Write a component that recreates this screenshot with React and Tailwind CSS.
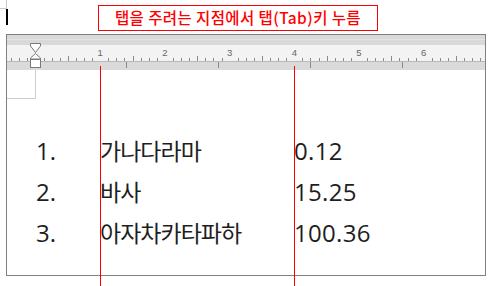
import React from "react";

const ORIGIN = 28.5; // svg x of ruler zero
const UNIT = 64.7;

function Ruler() {
  const ticks = [];
  for (let k = -3; k <= 56; k++) {
    const x = ORIGIN + (UNIT / 8) * k;
    if (x < 0 || x > 477) continue;
    if (k % 8 === 0) continue;
    const half = k % 4 === 0;
    ticks.push(
      <line
        key={k}
        x1={Math.round(x) + 0.5}
        x2={Math.round(x) + 0.5}
        y1={half ? 21 : 23}
        y2={26}
        stroke="#8a8a8a"
        strokeWidth="1"
      />
    );
  }
  const nums = [1, 2, 3, 4, 5, 6];
  const lower = [126, 218, 310, 402];
  return (
    <svg width="478" height="35" className="block">
      <rect x="0" y="0" width="478" height="10" fill="#d9d9d9" />
      <line x1="0" x2="478" y1="4.5" y2="4.5" stroke="#e3e3e3" />
      <rect x="0" y="10" width="478" height="16" fill="#f3f3f3" />
      <rect x="0" y="26" width="478" height="9" fill="#dadada" />
      <line x1="0" x2="478" y1="26.5" y2="26.5" stroke="#b9b9b9" />
      {ticks}
      {nums.map((n) => (
        <text
          key={n}
          x={ORIGIN + UNIT * n}
          y="21"
          textAnchor="middle"
          fontSize="9.5"
          fill="#666666"
          fontFamily="'Liberation Sans', sans-serif"
        >
          {n}
        </text>
      ))}
      {lower.map((x) => (
        <line key={x} x1={x - 7 + 0.5} x2={x - 7 + 0.5} y1="27" y2="33" stroke="#8a8a8a" />
      ))}
      <path d="M23.5 8.5 H33.5 V11 L28.5 17.5 L23.5 11 Z" fill="#ffffff" stroke="#7a7a7a" />
      <path d="M28.5 18.5 L33.5 23 V24 H23.5 V23 Z" fill="#ffffff" stroke="#7a7a7a" />
      <rect x="23.5" y="24.5" width="10" height="8" fill="#ffffff" stroke="#7a7a7a" />
    </svg>
  );
}

const rows = [
  ["1.", "가나다라마", "0.12"],
  ["2.", "바사", "15.25"],
  ["3.", "아자차카타파하", "100.36"],
];

const latin = { fontFamily: "'Open Sans', 'Noto Sans', sans-serif" };
const hangul = { fontFamily: "'Noto Sans CJK KR', sans-serif" };

export default function App() {
  return (
    <div
      className="relative w-[493px] h-[286px] overflow-hidden bg-white"
      style={hangul}
    >
      <div className="flex items-start h-[34px]">
        <div className="flex flex-col w-[8px]">
          <div className="w-[7px] h-[9px] border-r border-b border-[#c8c8c8]" />
          <div className="ml-[6px] w-[2px] h-[16px] bg-black" />
        </div>
        <div className="ml-[90px] mt-[5px] w-[280px] h-[26px] border border-[#ff0000] flex items-center justify-center text-[15.5px] font-medium leading-none text-[#ff0000] tracking-[0.4px]">
          탭을 주려는 지점에서 탭(Tab)키 누름
        </div>
      </div>
      <div className="ml-[6px] w-[480px] h-[242px] border border-[#808080] flex flex-col">
        <Ruler />
        <div className="w-[29px] h-[29px] border-r border-b border-[#cfcfcf]" />
        <div className="mt-[31px] pl-[29px] leading-[41px] text-[#1e1e1e]">
          {rows.map((r) => (
            <div key={r[0]} className="flex items-baseline">
              <div className="w-[64px] text-[24px]" style={latin}>{r[0]}</div>
              <div className="w-[194px] text-[23px] tracking-[-1px]" style={hangul}>{r[1]}</div>
              <div className="text-[24px] tracking-[0.3px]" style={latin}>{r[2]}</div>
            </div>
          ))}
        </div>
      </div>
      <div className="absolute left-[100px] top-[66px] bottom-0 w-px bg-[#ff0000]" />
      <div className="absolute left-[294px] top-[66px] bottom-0 w-px bg-[#ff0000]" />
    </div>
  );
}
